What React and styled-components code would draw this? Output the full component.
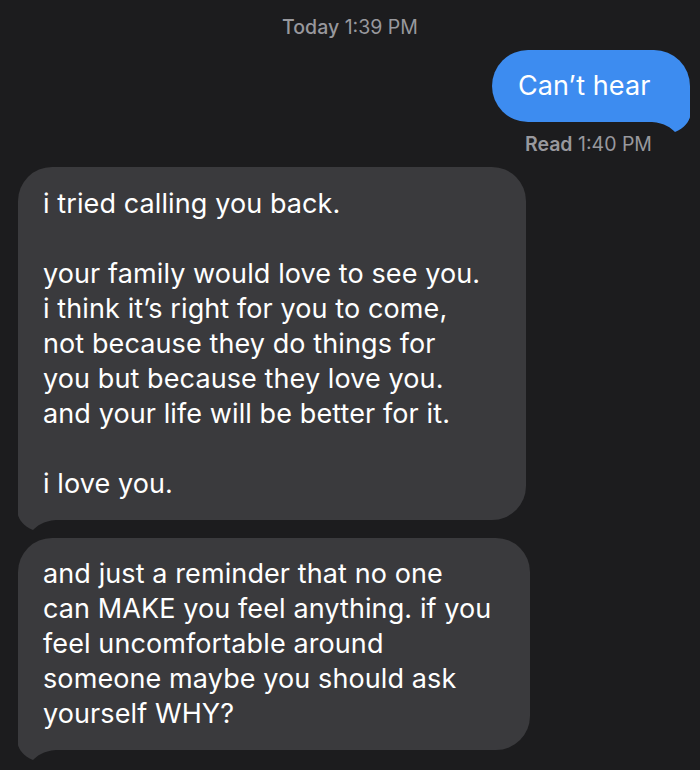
import React from "react";
import styled, { createGlobalStyle } from "styled-components";

const Global = createGlobalStyle`
  html, body { margin: 0; padding: 0; background: #1c1c1e; }
  body { font-family: Inter, "Liberation Sans", Arial, sans-serif; }
`;

const Screen = styled.div`
  width: 700px;
  height: 770px;
  overflow: hidden;
  background: #1c1c1e;
  display: flex;
  flex-direction: column;
  font-family: Inter, "Liberation Sans", Arial, sans-serif;
`;

const Stamp = styled.div`
  align-self: ${(p) => (p.$right ? "flex-end" : "center")};
  margin: ${(p) => p.$margin};
  font-size: 19.5px;
  line-height: 22px;
  color: #98989d;
  white-space: nowrap;
  b { font-weight: ${(p) => (p.$right ? 600 : 500)}; }
`;

const Row = styled.div`
  display: flex;
  justify-content: ${(p) => (p.$sent ? "flex-end" : "flex-start")};
  margin: ${(p) => p.$margin};
`;

const Bubble = styled.div`
  position: relative;
  box-sizing: border-box;
  width: ${(p) => p.$width}px;
  padding: ${(p) => p.$pad};
  background: ${(p) => (p.$sent ? "#3d8cf0" : "#3a3a3d")};
  color: #ffffff;
  font-size: 27px;
  line-height: 35px;
  letter-spacing: 0.1px;
  border-radius: ${(p) => (p.$sent ? "36px 36px 6px 36px" : "34px 34px 34px 6px")};
`;

const Line = styled.div`
  white-space: nowrap;
  min-height: 35px;
`;

const TailSvg = styled.svg`
  position: absolute;
  bottom: -10px;
  ${(p) => (p.$sent ? "right: 0; transform: scaleX(-1);" : "left: 0;")}
  width: 40px;
  height: 30px;
  display: block;
`;

const Tail = ({ sent, color }) => (
  <TailSvg $sent={sent} viewBox="0 0 40 30">
    <path d="M0 0 L0 12 C0 20 6 26 15 30 C19 26 25 21 38 20 L38 0 Z" fill={color} />
  </TailSvg>
);

const Message = ({ sent, lines, width, pad, margin }) => (
  <Row $sent={sent} $margin={margin}>
    <Bubble $sent={sent} $width={width} $pad={pad}>
      {lines.map((l, i) => (
        <Line key={i}>{l || "\u00a0"}</Line>
      ))}
      <Tail sent={sent} color={sent ? "#3d8cf0" : "#3a3a3d"} />
    </Bubble>
  </Row>
);

const first = [
  "i tried calling you back.",
  "",
  "your family would love to see you.",
  "i think it\u2019s right for you to come,",
  "not because they do things for",
  "you but because they love you.",
  "and your life will be better for it.",
  "",
  "i love you.",
];

const second = [
  "and just a reminder that no one",
  "can MAKE you feel anything. if you",
  "feel uncomfortable around",
  "someone maybe you should ask",
  "yourself WHY?",
];

export default function App() {
  return (
    <>
      <Global />
      <Screen>
        <Stamp $margin="16px 0 0 0">
          <b>Today</b> 1:39 PM
        </Stamp>
        <Message
          sent
          lines={["Can\u2019t hear"]}
          width={198}
          pad="18px 33px 19px 26px"
          margin="12px 10px 0 0"
        />
        <Stamp $right $margin="11px 48px 0 0">
          <b>Read</b> 1:40 PM
        </Stamp>
        <Message
          lines={first}
          width={508}
          pad="19px 20px 19px 25px"
          margin="12px 0 0 18px"
        />
        <Message
          lines={second}
          width={512}
          pad="18px 20px 19px 25px"
          margin="18px 0 0 18px"
        />
      </Screen>
    </>
  );
}
